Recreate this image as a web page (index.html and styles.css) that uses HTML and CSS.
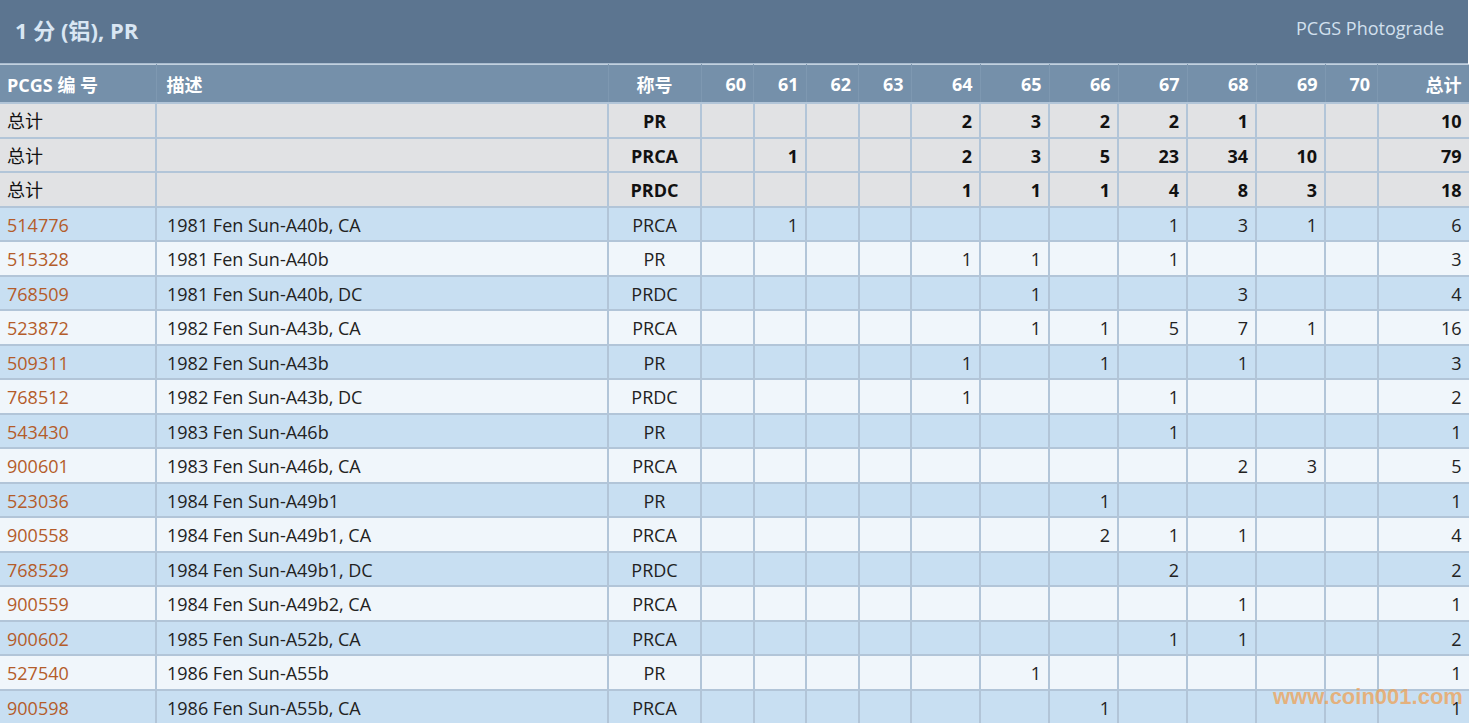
FILE: index.html
```html
<!DOCTYPE html>
<html lang="zh">
<head>
<meta charset="utf-8">
<title>1 分 (铝), PR</title>
<link rel="stylesheet" href="styles.css">
</head>
<body>
<div class="page">
  <div class="titlebar">
    <h1 class="title">1 分 (铝), PR</h1>
    <span class="brand">PCGS Photograde</span>
  </div>
  <table class="pop">
    <colgroup>
      <col class="c-id"><col class="c-desc"><col class="c-des">
      <col class="c-n"><col class="c-n"><col class="c-n"><col class="c-n">
      <col class="c-w"><col class="c-w"><col class="c-w"><col class="c-w"><col class="c-w"><col class="c-w">
      <col class="c-n"><col class="c-tot">
    </colgroup>
    <thead>
      <tr>
        <th class="l">PCGS 编 号</th><th class="l pl">描述</th><th class="c">称号</th>
        <th>60</th><th>61</th><th>62</th><th>63</th><th>64</th><th>65</th><th>66</th><th>67</th><th>68</th><th>69</th><th>70</th><th>总计</th>
      </tr>
    </thead>
    <tbody>
      <tr class="sum"><td class="l">总计</td><td></td><td class="c">PR</td><td></td><td></td><td></td><td></td><td>2</td><td>3</td><td>2</td><td>2</td><td>1</td><td></td><td></td><td>10</td></tr>
      <tr class="sum"><td class="l">总计</td><td></td><td class="c">PRCA</td><td></td><td>1</td><td></td><td></td><td>2</td><td>3</td><td>5</td><td>23</td><td>34</td><td>10</td><td></td><td>79</td></tr>
      <tr class="sum"><td class="l">总计</td><td></td><td class="c">PRDC</td><td></td><td></td><td></td><td></td><td>1</td><td>1</td><td>1</td><td>4</td><td>8</td><td>3</td><td></td><td>18</td></tr>

      <tr class="odd"><td class="l"><a href="#">514776</a></td><td class="l pl">1981 Fen Sun-A40b, CA</td><td class="c">PRCA</td><td></td><td>1</td><td></td><td></td><td></td><td></td><td></td><td>1</td><td>3</td><td>1</td><td></td><td>6</td></tr>
      <tr class="even"><td class="l"><a href="#">515328</a></td><td class="l pl">1981 Fen Sun-A40b</td><td class="c">PR</td><td></td><td></td><td></td><td></td><td>1</td><td>1</td><td></td><td>1</td><td></td><td></td><td></td><td>3</td></tr>
      <tr class="odd"><td class="l"><a href="#">768509</a></td><td class="l pl">1981 Fen Sun-A40b, DC</td><td class="c">PRDC</td><td></td><td></td><td></td><td></td><td></td><td>1</td><td></td><td></td><td>3</td><td></td><td></td><td>4</td></tr>
      <tr class="even"><td class="l"><a href="#">523872</a></td><td class="l pl">1982 Fen Sun-A43b, CA</td><td class="c">PRCA</td><td></td><td></td><td></td><td></td><td></td><td>1</td><td>1</td><td>5</td><td>7</td><td>1</td><td></td><td>16</td></tr>
      <tr class="odd"><td class="l"><a href="#">509311</a></td><td class="l pl">1982 Fen Sun-A43b</td><td class="c">PR</td><td></td><td></td><td></td><td></td><td>1</td><td></td><td>1</td><td></td><td>1</td><td></td><td></td><td>3</td></tr>
      <tr class="even"><td class="l"><a href="#">768512</a></td><td class="l pl">1982 Fen Sun-A43b, DC</td><td class="c">PRDC</td><td></td><td></td><td></td><td></td><td>1</td><td></td><td></td><td>1</td><td></td><td></td><td></td><td>2</td></tr>
      <tr class="odd"><td class="l"><a href="#">543430</a></td><td class="l pl">1983 Fen Sun-A46b</td><td class="c">PR</td><td></td><td></td><td></td><td></td><td></td><td></td><td></td><td>1</td><td></td><td></td><td></td><td>1</td></tr>
      <tr class="even"><td class="l"><a href="#">900601</a></td><td class="l pl">1983 Fen Sun-A46b, CA</td><td class="c">PRCA</td><td></td><td></td><td></td><td></td><td></td><td></td><td></td><td></td><td>2</td><td>3</td><td></td><td>5</td></tr>
      <tr class="odd"><td class="l"><a href="#">523036</a></td><td class="l pl">1984 Fen Sun-A49b1</td><td class="c">PR</td><td></td><td></td><td></td><td></td><td></td><td></td><td>1</td><td></td><td></td><td></td><td></td><td>1</td></tr>
      <tr class="even"><td class="l"><a href="#">900558</a></td><td class="l pl">1984 Fen Sun-A49b1, CA</td><td class="c">PRCA</td><td></td><td></td><td></td><td></td><td></td><td></td><td>2</td><td>1</td><td>1</td><td></td><td></td><td>4</td></tr>
      <tr class="odd"><td class="l"><a href="#">768529</a></td><td class="l pl">1984 Fen Sun-A49b1, DC</td><td class="c">PRDC</td><td></td><td></td><td></td><td></td><td></td><td></td><td></td><td>2</td><td></td><td></td><td></td><td>2</td></tr>
      <tr class="even"><td class="l"><a href="#">900559</a></td><td class="l pl">1984 Fen Sun-A49b2, CA</td><td class="c">PRCA</td><td></td><td></td><td></td><td></td><td></td><td></td><td></td><td></td><td>1</td><td></td><td></td><td>1</td></tr>
      <tr class="odd"><td class="l"><a href="#">900602</a></td><td class="l pl">1985 Fen Sun-A52b, CA</td><td class="c">PRCA</td><td></td><td></td><td></td><td></td><td></td><td></td><td></td><td>1</td><td>1</td><td></td><td></td><td>2</td></tr>
      <tr class="even"><td class="l"><a href="#">527540</a></td><td class="l pl">1986 Fen Sun-A55b</td><td class="c">PR</td><td></td><td></td><td></td><td></td><td></td><td>1</td><td></td><td></td><td></td><td></td><td></td><td>1</td></tr>
      <tr class="odd"><td class="l"><a href="#">900598</a></td><td class="l pl">1986 Fen Sun-A55b, CA</td><td class="c">PRCA</td><td></td><td></td><td></td><td></td><td></td><td></td><td>1</td><td></td><td></td><td></td><td></td><td>1</td></tr>
    </tbody>
  </table>
  <div class="watermark">www.coin001.com</div>
</div>
</body>
</html>
```

FILE: styles.css
```css
html, body {
  margin: 0;
  padding: 0;
  background: #ffffff;
  overflow: hidden;
}
body {
  font-family: "Open Sans", "Noto Sans CJK SC", sans-serif;
  font-size: 18px;
  color: #222222;
}
.page {
  width: 1468px;
  position: relative;
}
.titlebar {
  height: 64px;
  background: #5c7590;
  display: flex;
  align-items: center;
  justify-content: space-between;
  padding: 0 24px 0 15px;
  box-sizing: border-box;
  border-bottom: 1px solid #a9bccf;
}
.title {
  margin: 0;
  font-size: 22px;
  font-weight: 700;
  color: #d9e6f3;
  padding-bottom: 5px;
}
.brand {
  font-size: 18px;
  color: #d2e0ee;
  padding-bottom: 8px;
}
.pop {
  width: 1468px;
  border-collapse: collapse;
  table-layout: fixed;
}
.c-id { width: 156px; }
.c-desc { width: 452px; }
.c-des { width: 93px; }
.c-n { width: 52.5px; }
.c-w { width: 69px; }
.c-tot { width: 91px; }
.pop th {
  background: #7590aa;
  color: #ffffff;
  font-weight: 700;
  height: 37px;
  padding: 0 7px;
  text-align: right;
  border-top: 1px solid #c2d0de;
  border-left: 1px solid #7e98b1;
  border-right: 1px solid #7e98b1;
  border-bottom: 2px solid #b2c5d8;
  font-size: 18px;
}
.pop td {
  height: 30.5px;
  padding: 2px 7px 0;
  text-align: right;
  border: 2px solid #b2c5d8;
  border-top: 0;
  white-space: nowrap;
  line-height: 24px;
}
.pop th:first-child, .pop td:first-child { border-left: 0; }
.pop th:last-child, .pop td:last-child { border-right: 0; }
.pop .l { text-align: left; }
.pop .c { text-align: center; }
.pop .pl { padding-left: 10px; }
.pop .sum td {
  background: #e1e2e4;
  font-weight: 700;
  color: #111111;
}
.pop .sum td.l { font-weight: 400; }
.pop .odd td { background: #c8dff2; }
.pop .even td { background: #f0f6fb; }
.pop a {
  color: #b45c2a;
  text-decoration: none;
}
.watermark {
  position: absolute;
  left: 1273px;
  top: 684px;
  font-family: "Liberation Sans", sans-serif;
  font-weight: 700;
  font-size: 22px;
  color: rgba(240, 160, 80, 0.72);
}
```
